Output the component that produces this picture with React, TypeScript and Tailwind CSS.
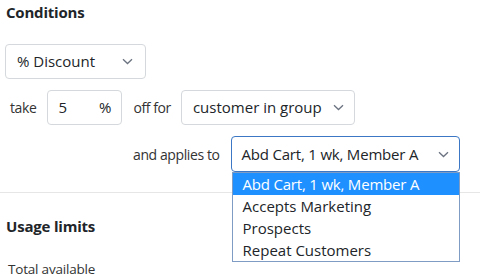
import React from "react";

function Chevron() {
  return (
    <svg width="11" height="7" viewBox="0 0 11 7" fill="none" className="shrink-0">
      <path d="M1 1.2 L5.5 5.5 L10 1.2" stroke="#6b7280" strokeWidth="1.3" />
    </svg>
  );
}

export default function App() {
  return (
    <div className="w-[480px] h-[274px] overflow-hidden bg-white text-[#212529] font-['Open_Sans',sans-serif] text-[15px]">
      <div className="px-[5px]">
        <div className="h-[24px] flex items-center font-bold text-[15px] pl-[1px] tracking-[-0.2px]">Conditions</div>
        <div className="mt-[20px] w-[141px] h-[35px] border border-[#d5d8dc] rounded-[4px] flex items-center justify-between pl-[11px] pr-[12px]">
          <span>% Discount</span>
          <Chevron />
        </div>
        <div className="mt-[11px] flex items-center h-[35px]">
          <span className="ml-[5px] text-[14px] tracking-[-0.4px] text-[#333]">take</span>
          <div className="ml-[11px] w-[75px] h-[35px] border border-[#d5d8dc] rounded-[4px] flex items-center justify-between pl-[10px] pr-[10px]">
            <span>5</span>
            <span>%</span>
          </div>
          <span className="ml-[11px] text-[14px] tracking-[-0.4px] text-[#333]">off for</span>
          <div className="ml-[10px] w-[174px] h-[35px] border border-[#d5d8dc] rounded-[4px] flex items-center justify-between pl-[11px] pr-[10px]">
            <span>customer in group</span>
            <Chevron />
          </div>
        </div>
        <div className="mt-[11px] flex items-center h-[36px]">
          <span className="ml-[128px] text-[14px] tracking-[-0.4px] text-[#333]">and applies to</span>
          <div className="relative ml-[11px] w-[229px] h-[36px] border border-[#3b77c4] rounded-[4px] flex items-center justify-between pl-[10px] pr-[10px]">
            <span className="tracking-[-0.2px]">Abd Cart, 1 wk, Member A</span>
            <Chevron />
            <div className="absolute left-0 top-[35px] w-[228px] border border-[#7f9cc4] bg-white z-10 flex flex-col">
              <div className="h-[22px] bg-[#1e90ff] text-white pl-[10px] flex items-center tracking-[-0.2px]">Abd Cart, 1 wk, Member A</div>
              <div className="h-[22px] pl-[10px] flex items-center">Accepts Marketing</div>
              <div className="h-[22px] pl-[10px] flex items-center">Prospects</div>
              <div className="h-[22px] pl-[10px] flex items-center">Repeat Customers</div>
            </div>
          </div>
        </div>
      </div>
      <div className="mt-[20px] border-t border-[#e6e6e6]" />
      <div className="px-[6px]">
        <div className="mt-[22px] font-bold text-[15px] tracking-[-0.2px]">Usage limits</div>
        <div className="mt-[21px] pl-[2px] text-[13.5px] tracking-[-0.2px] text-[#333]">Total available</div>
      </div>
    </div>
  );
}
